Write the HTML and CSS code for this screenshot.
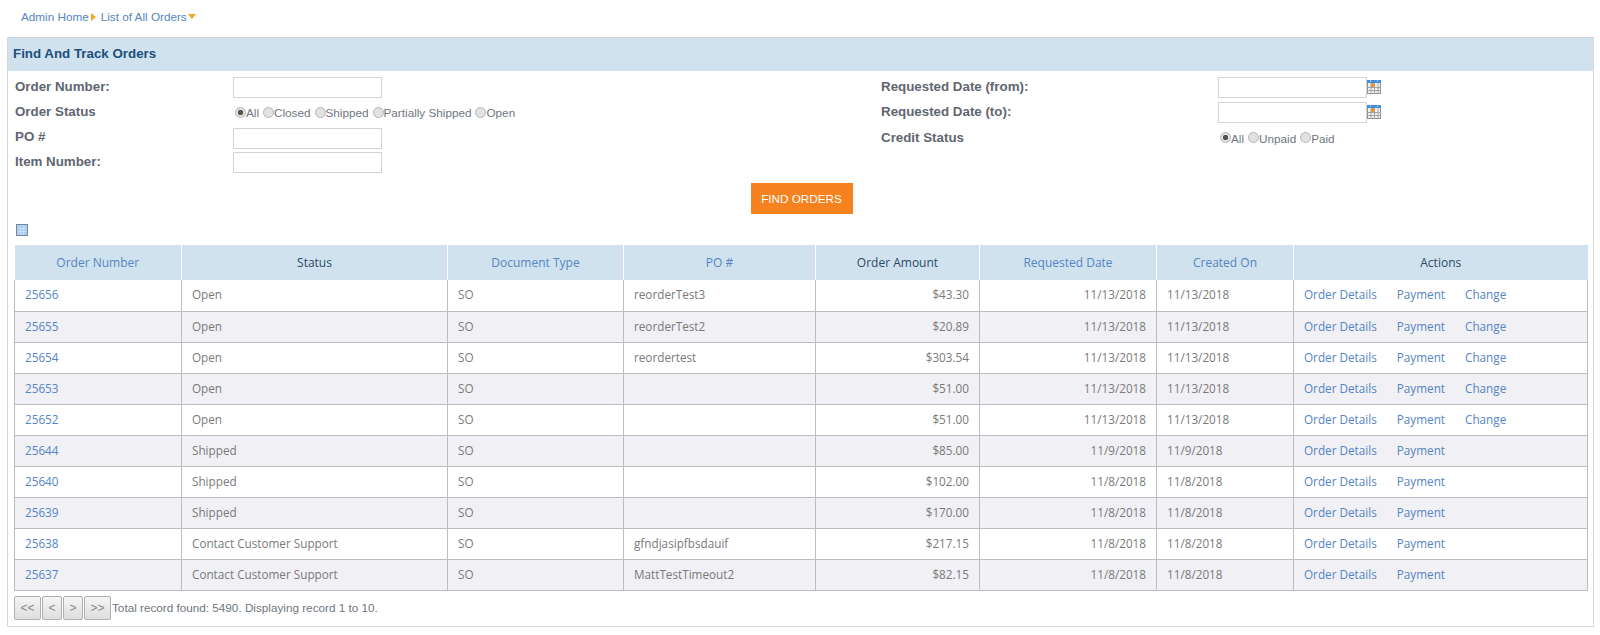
FILE: index.html
```html
<!DOCTYPE html>
<html lang="en">
<head>
<meta charset="utf-8">
<title>List of All Orders</title>
<link rel="stylesheet" href="styles.css">
</head>
<body>
<nav class="crumbs">
  <a href="#">Admin Home</a><span class="arrow-right"></span>
  <a href="#" class="crumb-second">List of All Orders</a><span class="arrow-down"></span>
</nav>
<section class="panel">
  <h2 class="panel-title">Find And Track Orders</h2>
  <form class="search">
    <div class="search-col">
      <div class="row"><label>Order Number:</label><input type="text" class="field"></div>
      <div class="row row-tall"><label>Order Status</label>
        <div class="radios">
          <input type="radio" name="os" checked><span>All</span>
          <input type="radio" name="os"><span>Closed</span>
          <input type="radio" name="os"><span>Shipped</span>
          <input type="radio" name="os"><span>Partially Shipped</span>
          <input type="radio" name="os"><span>Open</span>
        </div>
      </div>
      <div class="row row-raised"><label>PO #</label><input type="text" class="field"></div>
      <div class="row"><label>Item Number:</label><input type="text" class="field"></div>
    </div>
    <div class="search-col search-col-right">
      <div class="row row-date"><label>Requested Date (from):</label><input type="text" class="field">
        <svg class="cal" viewBox="0 0 14 14"><rect x=".5" y=".5" width="13" height="13" fill="#f1f1ee" stroke="#8f8f8f"/><rect width="14" height="3" fill="#3f8fdc"/><path d="M3 1h1M10 1h1" stroke="#fff"/><rect x="4" y="3" width="4" height="4" fill="#f7941e"/><path d="M0 7.500h14M0 10.500h14M4 3v11M7.500 3v11M11 3v11" stroke="#a3a3a3" fill="none"/></svg>
      </div>
      <div class="row row-date"><label>Requested Date (to):</label><input type="text" class="field">
        <svg class="cal" viewBox="0 0 14 14"><rect x=".5" y=".5" width="13" height="13" fill="#f1f1ee" stroke="#8f8f8f"/><rect width="14" height="3" fill="#3f8fdc"/><path d="M3 1h1M10 1h1" stroke="#fff"/><rect x="4" y="3" width="4" height="4" fill="#f7941e"/><path d="M0 7.500h14M0 10.500h14M4 3v11M7.500 3v11M11 3v11" stroke="#a3a3a3" fill="none"/></svg>
      </div>
      <div class="row row-lowered"><label>Credit Status</label>
        <div class="radios">
          <input type="radio" name="cs" checked><span>All</span>
          <input type="radio" name="cs"><span>Unpaid</span>
          <input type="radio" name="cs"><span>Paid</span>
        </div>
      </div>
    </div>
  </form>
  <div class="actions"><button type="button" class="find">FIND ORDERS</button></div>
  <svg class="grid-icon" viewBox="0 0 12 12"><rect x=".5" y=".5" width="11" height="11" fill="#b9d3ee" stroke="#6f88a3"/><rect x="2" y="2" width="8" height="8" fill="#a9cbf0"/><path d="M4.500 2v8M7.500 2v8M2 4.500h8M2 7.500h8" stroke="#d6e6f7" stroke-width=".7" fill="none"/></svg>
  <table class="orders">
    <colgroup>
      <col class="c1"><col class="c2"><col class="c3"><col class="c4"><col class="c5"><col class="c6"><col class="c7"><col class="c8">
    </colgroup>
    <thead>
      <tr><th><a href="#">Order Number</a></th><th>Status</th><th><a href="#">Document Type</a></th><th><a href="#">PO #</a></th><th>Order Amount</th><th><a href="#">Requested Date</a></th><th><a href="#">Created On</a></th><th>Actions</th></tr>
    </thead>
    <tbody>
      <tr><td><a href="#">25656</a></td><td>Open</td><td>SO</td><td>reorderTest3</td><td class="num">$43.30</td><td class="num">11/13/2018</td><td>11/13/2018</td><td class="links"><a href="#">Order Details</a><a href="#">Payment</a><a href="#">Change</a></td></tr>
      <tr><td><a href="#">25655</a></td><td>Open</td><td>SO</td><td>reorderTest2</td><td class="num">$20.89</td><td class="num">11/13/2018</td><td>11/13/2018</td><td class="links"><a href="#">Order Details</a><a href="#">Payment</a><a href="#">Change</a></td></tr>
      <tr><td><a href="#">25654</a></td><td>Open</td><td>SO</td><td>reordertest</td><td class="num">$303.54</td><td class="num">11/13/2018</td><td>11/13/2018</td><td class="links"><a href="#">Order Details</a><a href="#">Payment</a><a href="#">Change</a></td></tr>
      <tr><td><a href="#">25653</a></td><td>Open</td><td>SO</td><td></td><td class="num">$51.00</td><td class="num">11/13/2018</td><td>11/13/2018</td><td class="links"><a href="#">Order Details</a><a href="#">Payment</a><a href="#">Change</a></td></tr>
      <tr><td><a href="#">25652</a></td><td>Open</td><td>SO</td><td></td><td class="num">$51.00</td><td class="num">11/13/2018</td><td>11/13/2018</td><td class="links"><a href="#">Order Details</a><a href="#">Payment</a><a href="#">Change</a></td></tr>
      <tr><td><a href="#">25644</a></td><td>Shipped</td><td>SO</td><td></td><td class="num">$85.00</td><td class="num">11/9/2018</td><td>11/9/2018</td><td class="links"><a href="#">Order Details</a><a href="#">Payment</a></td></tr>
      <tr><td><a href="#">25640</a></td><td>Shipped</td><td>SO</td><td></td><td class="num">$102.00</td><td class="num">11/8/2018</td><td>11/8/2018</td><td class="links"><a href="#">Order Details</a><a href="#">Payment</a></td></tr>
      <tr><td><a href="#">25639</a></td><td>Shipped</td><td>SO</td><td></td><td class="num">$170.00</td><td class="num">11/8/2018</td><td>11/8/2018</td><td class="links"><a href="#">Order Details</a><a href="#">Payment</a></td></tr>
      <tr><td><a href="#">25638</a></td><td>Contact Customer Support</td><td>SO</td><td>gfndjasipfbsdauif</td><td class="num">$217.15</td><td class="num">11/8/2018</td><td>11/8/2018</td><td class="links"><a href="#">Order Details</a><a href="#">Payment</a></td></tr>
      <tr><td><a href="#">25637</a></td><td>Contact Customer Support</td><td>SO</td><td>MattTestTimeout2</td><td class="num">$82.15</td><td class="num">11/8/2018</td><td>11/8/2018</td><td class="links"><a href="#">Order Details</a><a href="#">Payment</a></td></tr>
    </tbody>
  </table>
  <div class="pager">
    <button type="button" class="wide">&lt;&lt;</button><button type="button">&lt;</button><button type="button">&gt;</button><button type="button" class="wide">&gt;&gt;</button>
    <span class="pager-text">Total record found: 5490. Displaying record 1 to 10.</span>
  </div>
</section>
</body>
</html>
```
FILE: styles.css
```css
* { box-sizing: border-box; }
html, body { margin: 0; padding: 0; }
body { background: #fff; font-family: "Liberation Sans", Arial, sans-serif; font-size: 11.73px; color: #666; height: 635px; overflow: hidden; }
a { color: #5585c4; text-decoration: none; }

.crumbs { display: flex; align-items: center; height: 37px; padding: 0 0 4px 21px; font-size: 11.73px; }
.arrow-right { width: 0; height: 0; margin-left: 2px; border-left: 5px solid #f5a623; border-top: 4px solid transparent; border-bottom: 4px solid transparent; }
.crumb-second { margin-left: 5px; }
.arrow-down { width: 0; height: 0; margin-left: 1px; border-top: 5px solid #f5a623; border-left: 4px solid transparent; border-right: 4px solid transparent; }

.panel { margin: 0 6px 0 7px; height: 590px; border: 1px solid #d8d8d8; border-top-color: #cfcfcf; padding-bottom: 6px; }
.panel-title { margin: 0; height: 33px; line-height: 32px; padding-left: 5px; background: #d0e2ee; color: #1c4f7c; font-size: 13.33px; font-weight: bold; }

.search { display: flex; padding: 5px 0 0 7px; height: 110px; }
.search-col { width: 866px; }
.search-col-right { width: 700px; }
.row { display: flex; align-items: flex-start; height: 24px; }
.row-tall { height: 27px; }
.row-tall label, .row-lowered label { padding-top: 1px; }
.row-tall .radios { margin-top: -2px; }
.row-raised label { margin-top: -1px; }
.row-date { height: 25px; }
.row label { width: 218px; flex: none; font-size: 13.33px; line-height: 21px; font-weight: bold; color: #5f6670; }
.search-col-right .row label { width: 337px; }
.field { width: 149px; height: 21px; margin: 1px 0 0; padding: 0 4px; border: 1px solid #d4d4d4; background: #fff; }
.cal { width: 14px; height: 14px; margin: 4px 0 0; }
.radios { display: flex; align-items: center; align-self: center; font-size: 11.73px; color: #6e7680; }
.radios input { appearance: none; width: 11px; height: 11px; margin: 0 0 1px 4px; border: 1px solid #b5b5b5; border-radius: 50%; background: #e2e2e2; }
.radios input:first-child { margin-left: 2px; }
.radios input:checked { background: radial-gradient(circle, #555 0 2.5px, #e2e2e2 3px); }

.actions { display: flex; justify-content: center; height: 31px; margin-top: 2px; padding-left: 2px; }
.find { width: 102px; height: 31px; padding: 0; border: 1px solid #f5811f; background: #f5811f; color: #fff; font: 11.73px "Liberation Sans", Arial, sans-serif; }

.grid-icon { display: block; width: 12px; height: 12px; margin: 10px 0 0 8px; }

.orders { width: 1573px; margin: 9px 0 0 6px; border-collapse: collapse; table-layout: fixed; font-family: "Open Sans", Arial, sans-serif; font-size: 11.73px; }
.c1 { width: 167px; } .c2 { width: 266px; } .c3 { width: 176px; } .c4 { width: 192px; }
.c5 { width: 164px; } .c6 { width: 177px; } .c7 { width: 137px; } .c8 { width: 294px; }
.orders th { height: 35px; padding: 0; background: #d0e2ee; border-left: 1px solid #fff; font-size: 12px; font-weight: normal; color: #2c4a66; text-align: center; }
.orders th:first-child { border-left: 0; }
.orders td { height: 31px; padding: 0 10px 2px; border: 1px solid #bdbdbd; color: #7a7a7a; white-space: nowrap; }
.orders tbody tr:first-child td { border-top: 0; }
.orders tbody tr:nth-child(even) td { background: #f0f0f5; }
.orders td.num { text-align: right; }
.links a { margin-right: 20px; }

.pager { display: flex; align-items: center; margin: 5px 0 0 6px; height: 24px; }
.pager button { width: 20px; height: 24px; margin-right: 1px; padding: 0; border: 1px solid #b0b0b0; border-radius: 2px; background: linear-gradient(#f5f5f5, #dedede); color: #888; font: 12px "Liberation Sans", Arial, sans-serif; }
.pager button.wide { width: 27px; }
.pager-text { font-size: 11.73px; color: #6e7680; }
```
